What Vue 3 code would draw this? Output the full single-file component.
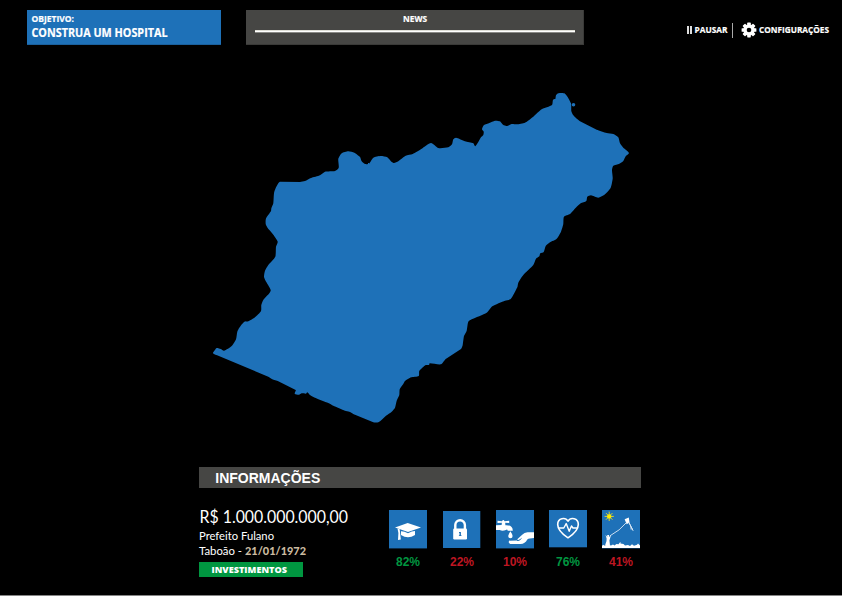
<script setup>
const stats = [
  { id: 'education', value: 82, good: true },
  { id: 'security', value: 22, good: false },
  { id: 'water', value: 10, good: false },
  { id: 'health', value: 76, good: true },
  { id: 'leisure', value: 41, good: false },
]

// Outline of the municipality, smoothed into a closed Catmull-Rom curve.
const border = '280 181.7L274.3 191.7L273.3 203.3L271.3 208.5L271 211L266 218.5L265.7 224L267.7 228L273.3 234.7L277.7 241.7L276 246.7L275.3 256.7L268.3 265L265 270.7L264 276.7L265.3 280.3L270.7 290L269.3 293.3L263.3 300L261.3 305L261 311L255 317.3L248.3 321.3L244.3 321.7L239.3 327.7L237.3 331.7L236 339.3L231.7 346L224 350.7L220.7 349L216.7 348L215 350L213 353.3L218.3 355.7L268.3 376.7L272.3 379.3L278.3 381.3L295.7 390L294.7 393.7L299 394.7L301.7 393.3L306 393.7L307.3 392.3L310 395L315 397.7L328.3 403L333.3 405.7L345 410.7L349.3 411.7L355 414.7L373.3 422.3L378.3 422.3L382.3 419.3L386 415.7L391.7 411.7L395 407.7L396.7 400.7L399.3 395L399.7 389.3L403.3 384L405 381L411 377.3L418.7 376L419.3 371L425.7 365L429 365L429.7 363.3L441 364.3L445.7 359L461 349L462.7 345L464 336L466.7 330.7L468.3 321.7L471.7 319.3L486.7 312.7L492.3 306.3L505 300.7L510.7 299L517.3 287.3L518.3 282.7L523.3 275L533.3 265L536 258.7L539.3 256.3L540.3 253.3L543.7 252L545.7 246L550 242.3L556.7 238.7L561 231.7L563.3 224L564 216.7L570 214L576.7 206.7L580.7 203.3L586.3 201L587.3 196.7L591 195.3L598.3 197.7L605 194.3L610.7 187.7L612.7 178.3L612 170L613.3 165.7L619.3 163.7L623.3 161L625.7 156.3L629 153L623.3 147.7L620 143.3L618.3 137.3L613.3 134L606.7 133L596.7 129.7L580 121.3L573.3 115.3L571.3 111L571 103.3L565 93.7L558.3 93.3L556 95.3L555.3 99L553 99.7L552 105L541.7 109.3L533.3 116.7L525 122.7L516.7 124.3L511.7 124L507.3 126L503 124.7L500 121.3L495 120.7L489.3 123L484 125L482 129.3L483.7 131.7L483.3 135L481 137.3L475.3 146.3L473.3 143.3L465 141.3L456 137.7L453.3 139.3L452 144.3L448.3 147.3L438.3 148L431 143L421.7 148.7L412.7 154L405.7 155.8L398.3 161.3L394 163L391.7 162L387.3 157.3L380.7 156L373.3 157.7L369 163.7L365 164L361.7 161.3L360 157L354.3 152.7L348.3 151.3L341.7 153.3L338.3 159L338.7 167.7L335 171L325 171.7L320 175.3L311 178L305 181L300 181.9'
  .split('L').map((p) => p.split(' ').map(Number))

function smooth(pts) {
  const n = pts.length
  let d = `M${pts[0].join(' ')}`
  for (let i = 0; i < n; i++) {
    const a = pts[(i + n - 1) % n]
    const b = pts[i]
    const c = pts[(i + 1) % n]
    const e = pts[(i + 2) % n]
    const len = Math.hypot(c[0] - b[0], c[1] - b[1])
    const t1 = (0.2 * len) / Math.hypot(c[0] - a[0], c[1] - a[1])
    const t2 = (0.2 * len) / Math.hypot(e[0] - b[0], e[1] - b[1])
    const c1 = [b[0] + (c[0] - a[0]) * t1, b[1] + (c[1] - a[1]) * t1]
    const c2 = [c[0] - (e[0] - b[0]) * t2, c[1] - (e[1] - b[1]) * t2]
    // Long runs are straight borders.
    d += len > 17 ? `L${c.join(' ')}` : `C${c1.join(' ')} ${c2.join(' ')} ${c.join(' ')}`
  }
  return d + 'Z'
}
const outline = smooth(border)
</script>

<template>
  <main class="game">
    <header class="top">
      <section class="goal">
        <svg class="line" width="190" height="12"><text class="cond" x="0.5" y="9" font-size="9" textLength="42.5" lengthAdjust="spacingAndGlyphs">OBJETIVO:</text></svg>
        <svg class="line" width="190" height="16"><text class="cond" x="0.5" y="12" font-size="12" textLength="136" lengthAdjust="spacingAndGlyphs">CONSTRUA UM HOSPITAL</text></svg>
      </section>
      <section class="news">
        <svg class="line" width="24" height="12"><text class="cond" x="0" y="9" font-size="9" textLength="24" lengthAdjust="spacingAndGlyphs">NEWS</text></svg>
        <div class="ticker"></div>
      </section>
      <nav class="menu">
        <button class="pause">
          <span class="bars"></span>
          <svg class="line" width="33" height="16"><text class="cond" x="0.5" y="11" font-size="9.4" textLength="33" lengthAdjust="spacingAndGlyphs">PAUSAR</text></svg>
        </button>
        <span class="divider"></span>
        <button class="config">
          <svg class="gear" width="16" height="16" viewBox="-8 -8 16 16">
            <g fill="#fff">
              <rect v-for="a in [0, 45, 90, 135]" :key="a" x="-1.8" y="-7.4" width="3.6" height="14.8" rx=".6" :transform="`rotate(${a})`" />
              <circle r="5.7" />
            </g>
            <circle r="2.3" fill="#000" />
          </svg>
          <svg class="line" width="70" height="16"><text class="cond" x="0" y="11" font-size="9.4" textLength="70" lengthAdjust="spacingAndGlyphs">CONFIGURAÇÕES</text></svg>
        </button>
      </nav>
    </header>

    <svg class="map" width="418" height="332" viewBox="212 92 418 332">
      <path :d="outline" />
      <circle cx="573.5" cy="104.7" r="1.8" />
    </svg>

    <section class="info">
      <h2>INFORMAÇÕES</h2>
      <div class="details">
        <div class="city">
          <svg class="line" width="160" height="20"><text class="light" x="0.5" y="15.3" font-size="17" textLength="148.5" lengthAdjust="spacingAndGlyphs">R$ 1.000.000.000,00</text></svg>
          <svg class="line" width="160" height="15"><text class="light" x="0" y="12" font-size="12" textLength="75" lengthAdjust="spacingAndGlyphs">Prefeito Fulano</text></svg>
          <svg class="line" width="160" height="16"><text class="light" x="0" y="12" font-size="12" textLength="43" lengthAdjust="spacingAndGlyphs">Taboão -</text><text class="date" x="46" y="12" font-size="11.8" textLength="61" lengthAdjust="spacingAndGlyphs">21/01/1972</text></svg>
          <button class="invest">
            <svg class="line" width="77" height="14"><text class="heavy" x="0.5" y="10.8" font-size="9.3" textLength="75.5" lengthAdjust="spacingAndGlyphs">INVESTIMENTOS</text></svg>
          </button>
        </div>
        <ul class="stats">
          <li v-for="s in stats" :key="s.id">
            <svg class="tile" width="38" height="39" viewBox="0 0 38 39">
              <rect v-if="s.id === 'security'" x="0" y="1" width="37.3" height="37" fill="#1e71b8" />
              <rect v-else width="38" :height="s.id === 'health' ? 37.3 : 38.4" fill="#1e71b8" />
              <g v-if="s.id === 'education'" fill="#fff">
                <path d="M6 17.6L18.7 13L32 17.4L19 21.9Z" />
                <path d="M12 21.2Q15 21 19 23.3Q23 21 26 21V25Q19 29.5 12 25Z" />
                <path d="M8.5 18.5L10.7 19.3L11.8 29.6L9 30L9.4 23Z" />
              </g>
              <g v-else-if="s.id === 'security'" transform="translate(0 1)">
                <path d="M12.3 18V14A4.8 4.8 0 0 1 21.9 14V18" fill="none" stroke="#fff" stroke-width="2.4" />
                <rect x="10.2" y="17.6" width="13.8" height="10.9" rx="1.2" fill="#fff" />
                <path d="M16 21H17.9V24.2H18.5V25H15.9V24.2H16.5V22H16Z" fill="#1e71b8" />
              </g>
              <g v-else-if="s.id === 'water'" fill="#fff">
                <path d="M1.5 10.7L6 11.2Q7.3 9 8.6 11.2L13.2 10.7V13L9.2 12.8L9.4 15.2Q16.8 14.8 16.8 20.8H11.7Q11.5 18.9 9.9 19.9Q6.5 21.3 3.8 20L0 20.1V15.3L5.6 15L5.9 12.8L1.5 13Z" />
                <path d="M14.4 21.3Q16.8 24.8 16.6 26A2.2 2.2 0 0 1 12.2 26Q12.2 24.8 14.4 21.3Z" />
                <path d="M38 22.2H31.5Q28.3 22.4 26.2 24.7L21.3 29.2L21.9 30.2Q24.4 28.9 26.2 27.4Q24.4 31.1 20.9 31.1L14.5 31.4L13.6 30.6Q12.3 31.2 13 33L14.3 33.9H24.6Q29 33.7 31.3 29.4Q33 28.2 38 28.1Z" />
                <path d="M13.4 30.8L21 30.4V32.5H13.4Z" />
              </g>
              <g v-else-if="s.id === 'health'" fill="none" stroke="#fff" stroke-linejoin="round">
                <path d="M19 27.8Q8.7 20.9 8.7 14.4C8.7 7.8 16.4 6.8 19 11.2C21.6 6.8 29.3 7.8 29.3 14.4Q29.3 20.9 19 27.8Z" stroke-width="1.6" />
                <path d="M10 18H14.8L17.2 13.6L20.2 21.3L22.5 16L24 18H28.3" stroke-width="1.4" />
              </g>
              <g v-else fill="#fff">
                <path d="M7.2 1.6V11M2.6 6.4H11.8M4 3.1L10.4 9.7M10.4 3.1L4 9.7" stroke="#e8d92a" stroke-width=".9" />
                <circle cx="7.2" cy="6.4" r="2.2" fill="#ffed00" />
                <path d="M22.6 9.2L26.8 7.6L27.5 12.4L24.7 14.2Z" />
                <path d="M8 25.8Q18 20.5 24.5 12.5M26.5 12L28.7 16L29.2 19.7M27 12.5L31 20.5L29 16.5" fill="none" stroke="#dce9f5" stroke-width=".9" />
                <path d="M3.5 24.8L5.3 27L5.2 25.1L7 25L7.2 27L9 25.2L8 28.5L7.4 30.4L8 35.5H3L4.5 31L4.6 28.5Z" />
                <path d="M0 36L1 34.8L3 35.8L5 34.2L9 35.5L11 34.6L12.4 35.5L14.5 34L16.5 34.3L18.4 31.8L18.5 33.5L21.5 34L23 35.6L26 35L28 36L30 34.3L32 35.7L35 34.8L36 33.5L38 35.5V38H0Z" />
              </g>
            </svg>
            <span :class="s.good ? 'up' : 'down'">{{ s.value }}%</span>
          </li>
        </ul>
      </div>
    </section>
  </main>
</template>

<style>
html, body { margin: 0; background: #000; overflow: hidden; }
</style>

<style scoped>
* { box-sizing: border-box; }
.game { width: 842px; height: 596px; background: #000; border-bottom: 1px solid #858585; display: flex; flex-direction: column; color: #fff; font-family: "Liberation Sans", Arial, sans-serif; }
button { background: none; border: 0; padding: 0; margin: 0; color: inherit; display: flex; }
.line { display: block; overflow: visible; flex: none; fill: #fff; }
.cond { font-family: "Open Sans", sans-serif; font-weight: 700; stroke: #fff; stroke-width: .2px; }
.light { font-family: Lato, sans-serif; font-weight: 400; }
.heavy { font-family: "Open Sans", sans-serif; font-weight: 800; }
.date { font-family: Lato, sans-serif; font-weight: 900; fill: #cbbba0; }
.top { height: 45px; padding: 10px 13px 0 27px; display: flex; flex: none; }
.goal { width: 194px; height: 35px; padding: 3px 0 0 4px; background: #1e71b8; border: solid #1a609d; border-width: 0 0 1px; }
.news { width: 338px; height: 35px; margin-left: 25px; padding: 3px 9px 0; background: #464644; border: solid #3a3a38; border-width: 0 1px 1px 0; display: flex; flex-direction: column; align-items: center; }
.ticker { width: 320px; height: 3px; margin-top: 5px; background: linear-gradient(#e0e0d8 1px, #fff 1px 2px, #8a8a86 2px); }
.menu { margin-left: auto; height: 18px; margin-top: 11px; display: flex; align-items: center; }
.pause { align-items: center; gap: 2px; }
.bars { width: 5px; height: 8px; margin-right: .5px; background: linear-gradient(90deg, #ddd 1.6px, #000 1.6px 3.4px, #ddd 3.4px); }
.divider { width: 1px; height: 15px; margin: 0 8px 0 5px; background: #aaa; }
.config { align-items: center; gap: 2px; }
.map { margin: 47px 0 0 212px; flex: none; fill: #1e71b8; }
.info { width: 442px; margin: 43px 0 0 199px; }
h2 { margin: 0; width: 441.5px; height: 21px; padding-left: 16.3px; background: #464644; font-size: 14px; line-height: 22px; font-weight: 700; }
.details { display: flex; }
.city { width: 190px; padding-top: 20px; }
.invest { width: 104px; height: 15px; margin-top: 3px; padding-left: 12px; background: #009640; }
.stats { list-style: none; margin: 0; padding: 22px 0 0; display: grid; grid-template-columns: 54px 53px 53px 53px 38px; }
.stats li { width: 38px; display: flex; flex-direction: column; align-items: center; font-size: 12px; line-height: 14px; font-weight: 700; }
.tile { display: block; margin-bottom: 6px; }
.up { color: #009640; }
.down { color: #be1622; }
</style>
